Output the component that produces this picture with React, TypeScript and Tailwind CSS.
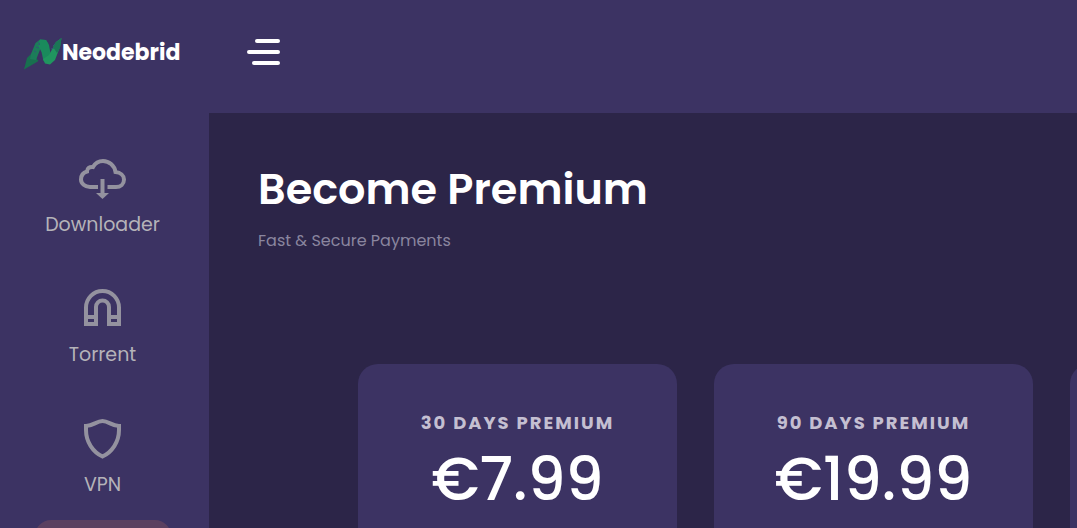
const plans = [
  { name: "30 Days Premium", price: "€7.99" },
  { name: "90 Days Premium", price: "€19.99" },
];

function Logo() {
  return (
    <svg width="38" height="32" viewBox="0 0 38 32" aria-hidden="true">
      <path d="M0 31.5 3 20 8 15 14.500 23 9.500 26Z" fill="#18704f" />
      <path d="M7 16 11.500 5 16 1.500 22 2 24.500 6 17 9 12 22 6 21Z" fill="#1c7d59" />
      <path d="M16 1.500 22 2 25 7 27 18 24 25 19.500 23 17.500 14 14 7Z" fill="#1a8a5c" />
      <path d="M19 21 25 17 32 4 37.500 0 36 9 31 22 26 26.500 21 25.500Z" fill="#20965f" />
      <path d="M31 5 37.500 0 36 10 33 15 29 9Z" fill="#1b7656" />
      <path d="m14 4 2 2-2 1m-2 2 3 1m-5 3 2 1m19-8-2 2m1 2-3 1" fill="none" stroke="#305a72" />
    </svg>
  );
}

function CloudIcon() {
  return (
    <svg width="47" height="40" viewBox="0 0 47 40" fill="none" stroke="currentColor" strokeWidth="4" aria-hidden="true">
      <path d="M19 28H11C6 28 2 24.500 2 20.500C2 16.500 4.500 13.500 8 12.500C8 9.500 10.500 7.500 14 8C16 4.500 19.500 2 24 2C30 2 35.500 6.500 36.500 13C41.500 13.500 45 16.500 45 20.500C45 25 41.500 28 37 28H28.500" />
      <path d="M23.500 20V35" />
      <path d="M17 34H30L23.500 40Z" fill="currentColor" stroke="none" />
    </svg>
  );
}

function MagnetIcon() {
  return (
    <svg width="37" height="37" viewBox="0 0 37 37" fill="none" stroke="currentColor" strokeWidth="4" aria-hidden="true">
      <path d="M2 35V18.500A16.500 16.500 0 0 1 35 18.500V35H25V18A6.500 6.500 0 0 0 12 18V35Z" />
      <path d="M2 28H12M25 28H35" />
    </svg>
  );
}

function ShieldIcon() {
  return (
    <svg width="37" height="40" viewBox="0 0 37 40" fill="none" stroke="currentColor" strokeWidth="4" aria-hidden="true">
      <path d="M2 7C9 7 12.500 2 18.500 2S28 7 35 7V11C35 23 28 33 18.500 37.500C9 33 2 23 2 11Z" />
    </svg>
  );
}

const links = [
  { label: "Downloader", icon: <CloudIcon /> },
  { label: "Torrent", icon: <MagnetIcon /> },
  { label: "VPN", icon: <ShieldIcon /> },
];

export default function App() {
  return (
    <div className="flex h-screen flex-col overflow-hidden bg-[#3c3363] font-[Poppins,Inter,sans-serif] text-white">
      <header className="flex h-[113px] shrink-0 items-start">
        <a href="#" className="flex w-[209px] shrink-0 items-start pt-[38px] pl-6 text-[22px] leading-[30px] font-bold">
          <Logo />
          <span>Neodebrid</span>
        </a>
        <button type="button" aria-label="Menu" className="ml-[38px] flex w-[33px] flex-col items-end gap-[7px] pt-[39px]">
          <span className="h-1 w-[25px] rounded-full bg-white" />
          <span className="h-1 w-full rounded-full bg-white" />
          <span className="h-1 w-7 rounded-full bg-white" />
        </button>
      </header>

      <div className="flex min-h-0 flex-1">
        <aside className="w-[209px] shrink-0 pr-1">
          <nav className="flex flex-col items-center pt-[46px]">
            {links.map((link) => (
              <a key={link.label} href="#" className="flex h-[130px] flex-col items-center text-[#b5b3b9]">
                <span className="h-[46px] text-[#94929f]">{link.icon}</span>
                <span className="mt-1 text-[19px] leading-8">{link.label}</span>
              </a>
            ))}
            <a href="#" aria-label="Premium" className="-mt-[29px] h-[110px] w-[136px] shrink-0 rounded-2xl bg-[#5b4060]" />
          </nav>
        </aside>

        <main className="min-w-0 flex-1 overflow-hidden bg-[#2c2548] pt-[46px] pl-[49px]">
          <h1 className="text-[43px] leading-[60px] font-semibold">Become Premium</h1>
          <p className="mt-2.5 text-base leading-6 text-[#8a859f]">Fast &amp; Secure Payments</p>
          <div className="mt-[111px] ml-[100px] flex gap-[37px]">
            {plans.map((plan) => (
              <section key={plan.name} className="h-[400px] w-[319px] shrink-0 rounded-[20px] bg-[#3c3363] pt-[45px] text-center">
                <h2 className="text-lg leading-7 font-bold tracking-[2px] text-[#c4bfd1] uppercase">{plan.name}</h2>
                <p className="mt-1.5 text-[60px] leading-[72px] font-medium">{plan.price}</p>
              </section>
            ))}
            <section className="h-[400px] w-[319px] shrink-0 rounded-[20px] bg-[#3c3363]" />
          </div>
        </main>
      </div>
    </div>
  );
}
